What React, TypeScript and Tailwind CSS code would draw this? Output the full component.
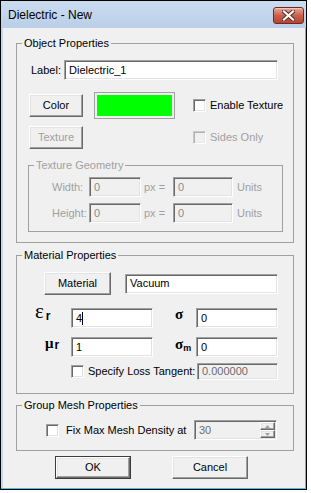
import React from "react";

const sunken =
  "border border-t-[#a0a0a0] border-l-[#a0a0a0] border-b-white border-r-white shadow-[inset_1px_1px_0_#696969,inset_-1px_-1px_0_#e3e3e3]";
const raised =
  "border border-t-white border-l-white border-b-[#696969] border-r-[#696969] shadow-[inset_-1px_-1px_0_#a0a0a0,inset_1px_1px_0_#e3e3e3] bg-[#f0f0f0] flex items-center justify-center";

function Check({ disabled }: { disabled?: boolean }) {
  return (
    <div
      className={
        disabled
          ? "w-[13px] h-[13px] shrink-0 border border-t-[#c8c8c8] border-l-[#c8c8c8] border-b-white border-r-white shadow-[inset_1px_1px_0_#b0b0b0,inset_-1px_-1px_0_#e8e8e8] bg-[#f0f0f0]"
          : "w-[13px] h-[13px] shrink-0 " + sunken + " bg-white"
      }
    />
  );
}

function SpinArrow({ up }: { up?: boolean }) {
  return (
    <div className={raised + " w-[15px] h-[8px]"}>
      <svg width="5" height="3" viewBox="0 0 5 3">
        {up ? (
          <polygon points="2.5,0 5,3 0,3" fill="#a0a0a0" />
        ) : (
          <polygon points="0,0 5,0 2.5,3" fill="#a0a0a0" />
        )}
      </svg>
    </div>
  );
}

export default function App() {
  return (
    <div className="w-[311px] h-[493px] bg-white font-['Liberation_Sans',Arial,sans-serif] text-[11px] leading-[13px] text-black">
      <div className="w-[307px] h-[490px] border border-black bg-[#c4d7ed] flex flex-col">
        {/* Title bar */}
        <div className="h-[27px] shrink-0 flex items-start pl-[7px] pr-[2px] bg-gradient-to-b from-[#cbdcef] to-[#b9cfe8]">
          <div className="mt-[6px] text-[12px] leading-[16px] text-black">Dielectric - New</div>
          <div className="ml-auto mt-[6px] w-[31px] h-[17px] rounded-[3px] border border-[#6e2a22] bg-gradient-to-b from-[#e6a89c] via-[#c9604d] to-[#b8412e] shadow-[inset_0_1px_0_#f2c6bd] flex items-center justify-center">
            <svg width="13" height="11" viewBox="0 0 13 11">
              <path d="M2 1.5 L11 9.5 M11 1.5 L2 9.5" stroke="#5a2a24" strokeWidth="4" strokeLinecap="square" />
              <path d="M2 1.5 L11 9.5 M11 1.5 L2 9.5" stroke="#ffffff" strokeWidth="2.2" strokeLinecap="square" />
            </svg>
          </div>
        </div>
        {/* Body */}
        <div className="flex-1 flex">
          <div className="w-[2px] bg-[#c4d7ed]" />
          <div className="w-[302px] bg-[#f0f0f0] flex flex-col">
            {/* Object Properties */}
            <fieldset className="ml-[13px] mt-[9px] w-[278px] h-[206px] border border-[#a0a0a0]">
              <legend className="ml-[5px] px-[2px]">Object Properties</legend>
              <div className="flex flex-col">
                <div className="mt-[10px] flex items-center">
                  <span className="ml-[14px] w-[33px]">Label:</span>
                  <div className={sunken + " w-[214px] h-[20px] bg-white flex items-center px-[4px]"}>Dielectric_1</div>
                </div>
                <div className="mt-[12px] h-[27px] flex items-center">
                  <div className={raised + " ml-[12px] w-[54px] h-[23px]"}>Color</div>
                  <div className="ml-[11px] w-[81px] h-[27px] border border-[#a0a0a0] p-[2px]">
                    <div className="w-full h-full bg-[#00ff00]" />
                  </div>
                  <div className="ml-[18px]">
                    <Check />
                  </div>
                  <span className="ml-[4px]">Enable Texture</span>
                </div>
                <div className="mt-[7px] h-[23px] flex items-center">
                  <div className={raised + " ml-[12px] w-[54px] h-[23px] text-[#a0a0a0]"}>Texture</div>
                  <div className="ml-[110px]">
                    <Check disabled />
                  </div>
                  <span className="ml-[4px] text-[#a0a0a0]">Sides Only</span>
                </div>
                <fieldset className="ml-[11px] mt-[10px] w-[255px] h-[73px] border border-[#a0a0a0] text-[#a0a0a0]">
                  <legend className="ml-[5px] px-[2px]">Texture Geometry</legend>
                  <div className="mt-[5px] flex items-center">
                    <span className="ml-[23px] w-[37px]">Width:</span>
                    <div className={sunken + " w-[52px] h-[20px] flex items-center px-[4px] text-[#8a8a8a]"}>0</div>
                    <span className="ml-[3px] w-[29px]">px =</span>
                    <div className={sunken + " w-[60px] h-[20px] flex items-center px-[4px] text-[#8a8a8a]"}>0</div>
                    <span className="ml-[4px]">Units</span>
                  </div>
                  <div className="mt-[6px] flex items-center">
                    <span className="ml-[23px] w-[37px]">Height:</span>
                    <div className={sunken + " w-[52px] h-[20px] flex items-center px-[4px] text-[#8a8a8a]"}>0</div>
                    <span className="ml-[3px] w-[29px]">px =</span>
                    <div className={sunken + " w-[60px] h-[20px] flex items-center px-[4px] text-[#8a8a8a]"}>0</div>
                    <span className="ml-[4px]">Units</span>
                  </div>
                </fieldset>
              </div>
            </fieldset>

            {/* Material Properties */}
            <fieldset className="ml-[13px] mt-[6px] w-[278px] h-[145px] border border-[#a0a0a0]">
              <legend className="ml-[5px] px-[2px]">Material Properties</legend>
              <div className="mt-[10px] h-[23px] flex items-center">
                <div className={raised + " ml-[27px] w-[67px] h-[23px]"}>Material</div>
                <div className={sunken + " ml-[14px] w-[153px] h-[20px] bg-white flex items-center px-[4px]"}>Vacuum</div>
              </div>
              <div className="mt-[13px] h-[20px] flex items-start">
                <div className="ml-[16px] w-[38px] pl-[2px] -mt-[7px] flex items-baseline">
                  <span className="font-['Liberation_Serif',serif] text-[21px] leading-none">ε</span>
                  <span className="ml-[2px] font-bold text-[12px] leading-none translate-y-[2px]">r</span>
                </div>
                <div className={sunken + " w-[82px] h-[20px] bg-white flex items-center px-[4px]"}>
                  4<span className="w-[1px] h-[13px] bg-black" />
                </div>
                <div className="ml-[22px] w-[21px] -mt-[1px] flex items-baseline">
                  <span className="font-['Liberation_Serif',serif] font-bold text-[15px] leading-none">σ</span>
                </div>
                <div className={sunken + " w-[82px] h-[20px] bg-white flex items-center px-[4px]"}>0</div>
              </div>
              <div className="mt-[9px] h-[20px] flex items-start">
                <div className="ml-[16px] w-[38px] pl-[12px] -mt-[1px] flex items-baseline">
                  <span className="font-['Liberation_Serif',serif] font-bold text-[15px] leading-none">μ</span>
                  <span className="ml-[1px] font-bold text-[12px] leading-none translate-y-[1px]">r</span>
                </div>
                <div className={sunken + " w-[82px] h-[20px] bg-white flex items-center px-[4px]"}>1</div>
                <div className="ml-[22px] w-[21px] mt-[0px] flex items-baseline">
                  <span className="font-['Liberation_Serif',serif] font-bold text-[15px] leading-none">σ</span>
                  <span className="font-bold text-[9px] leading-none translate-y-[2px]">m</span>
                </div>
                <div className={sunken + " w-[82px] h-[20px] bg-white flex items-center px-[4px]"}>0</div>
              </div>
              <div className="mt-[6px] h-[17px] flex items-center">
                <div className="ml-[54px]">
                  <Check />
                </div>
                <span className="ml-[4px] w-[109px]">Specify Loss Tangent:</span>
                <div className={sunken + " w-[81px] h-[17px] flex items-center px-[4px] text-[#6d6d6d]"}>0.000000</div>
              </div>
            </fieldset>

            {/* Group Mesh Properties */}
            <fieldset className="ml-[13px] mt-[5px] w-[278px] h-[52px] border border-[#a0a0a0]">
              <legend className="ml-[5px] px-[2px]">Group Mesh Properties</legend>
              <div className="mt-[8px] h-[20px] flex items-center">
                <div className="ml-[29px]">
                  <Check />
                </div>
                <span className="ml-[7px] w-[128px]">Fix Max Mesh Density at</span>
                <div className={sunken + " w-[83px] h-[20px] flex items-center pl-[4px] text-[#6d6d6d]"}>
                  <span className="flex-1">30</span>
                  <div className="flex flex-col mr-[1px]">
                    <SpinArrow up />
                    <SpinArrow />
                  </div>
                </div>
              </div>
            </fieldset>

            {/* Buttons */}
            <div className="mt-[5px] flex">
              <div className="ml-[52px] w-[76px] h-[23px] border border-[#3c3c3c]">
                <div className={raised + " w-full h-full"}>OK</div>
              </div>
              <div className={raised + " ml-[41px] w-[76px] h-[23px]"}>Cancel</div>
            </div>
          </div>
          <div className="w-[1px] bg-[#3fc3e8]" />
        </div>
        <div className="h-[1px] shrink-0 bg-[#3fc3e8]" />
      </div>
    </div>
  );
}
